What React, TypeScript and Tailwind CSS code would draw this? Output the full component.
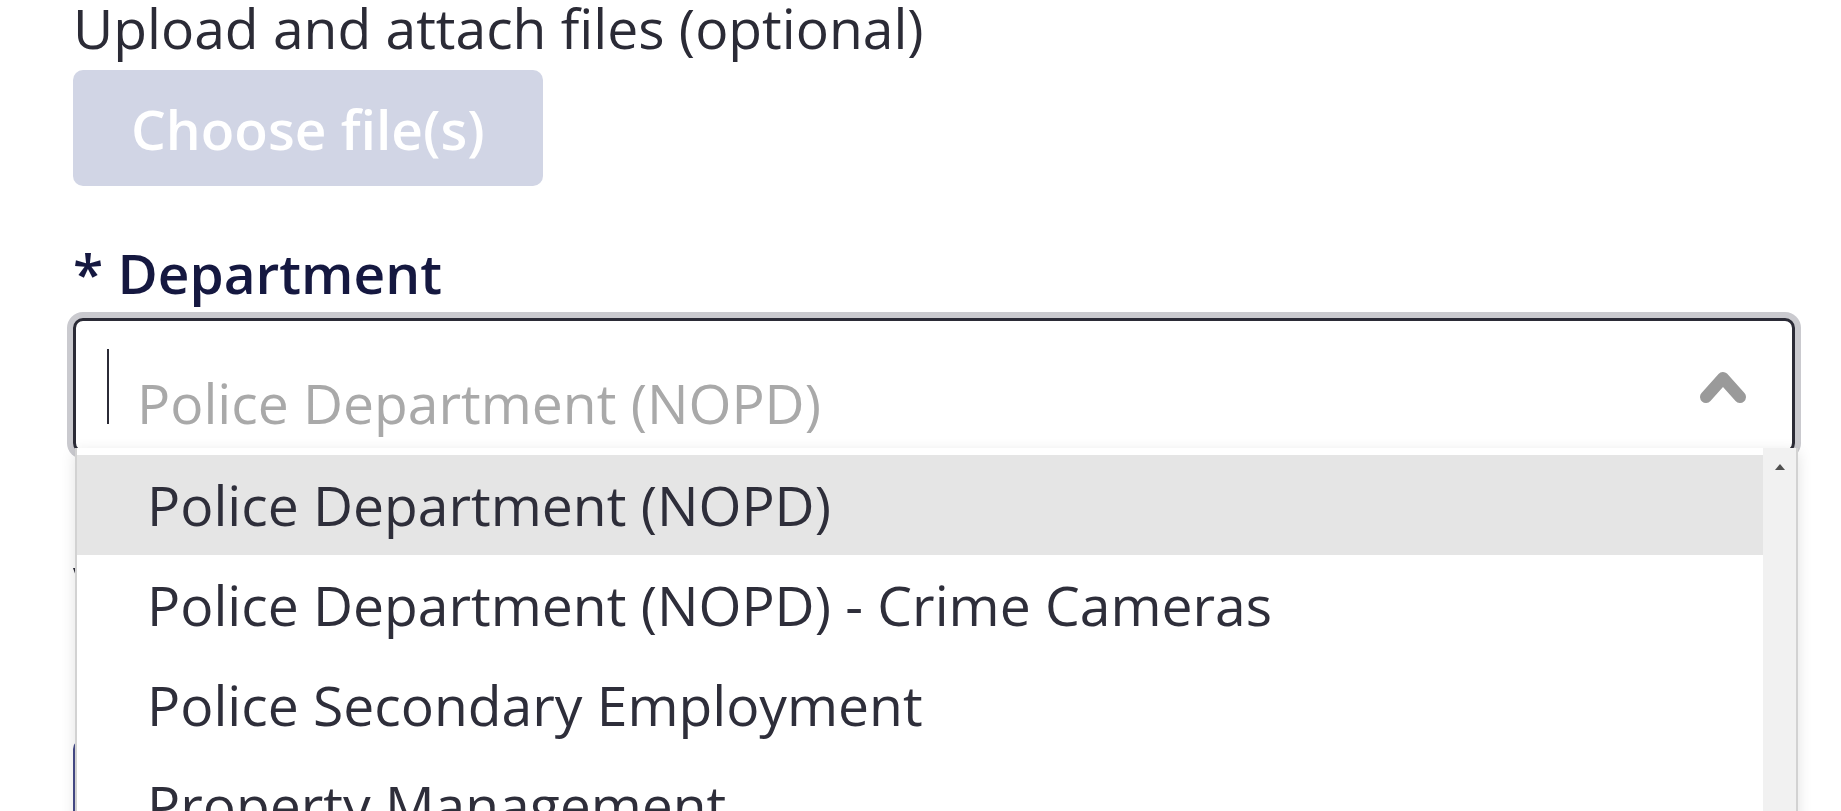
import React from "react";

const options = [
  "Police Department (NOPD)",
  "Police Department (NOPD) - Crime Cameras",
  "Police Secondary Employment",
  "Property Management",
];

const ChevronUp = () => (
  <svg width="48" height="36" viewBox="0 0 48 36" fill="none">
    <path
      d="M7 28 L24 9 L41 28"
      stroke="#9a9a9a"
      strokeWidth="12"
      strokeLinecap="round"
      strokeLinejoin="round"
    />
  </svg>
);

export default function App() {
  return (
    <div className="h-screen w-full overflow-hidden bg-white font-['Open_Sans',sans-serif]">
      <div className="flex flex-col items-start pl-[73px]">
        <p className="text-[55.2px] leading-none text-[#2b2b36]">Upload and attach files (optional)</p>
        <button className="mt-[15px] flex h-[116px] shrink-0 items-center rounded-[10px] bg-[#d1d5e5] px-[58px] text-[55px] font-semibold leading-none text-white">
          Choose file(s)
        </button>

        <p className="mt-[59px] text-[55px] font-semibold leading-none text-[#151840]">* Department</p>

        <div className="relative mt-[18px] mr-[46px] self-stretch">
          {/* select control */}
          <div className="flex h-[135px] items-start rounded-[10px] border-[3px] border-[#2b2b36] bg-white pl-[31px] pr-[45px] shadow-[0_0_0_6px_#cacacf]">
            <div className="mt-[28px] h-[75px] w-[2px] bg-[#2b2b36]" />
            <span className="mt-[54px] ml-[28px] flex-1 text-[55.2px] leading-none text-[#a9a9a9]">
              Police Department (NOPD)
            </span>
            <div className="mt-[48px]">
              <ChevronUp />
            </div>
          </div>

          {/* open menu */}
          <div className="absolute -right-[3px] left-[2px] top-[130px] z-10 flex h-[420px] border-x-2 border-[#d2d2d2] bg-white shadow-[0_4px_14px_rgba(0,0,0,0.12)]">
            <ul className="flex-1 pt-[7px]">
              {options.map((o, i) => (
                <li
                  key={o}
                  className={`flex h-[100px] items-center pl-[70px] text-[55.2px] text-[#2e2e3a] ${
                    i === 0 ? "bg-[#e5e5e5]" : ""
                  }`}
                >
                  {o}
                </li>
              ))}
            </ul>
            <div className="flex w-[33px] justify-center bg-[#f1f1f1] pt-[16px]">
              <div className="h-0 w-0 border-x-[5px] border-b-[6px] border-x-transparent border-b-[#505050]" />
            </div>
          </div>
        </div>

        {/* content under the menu */}
        <p className="mt-[105px] text-[55px] leading-none text-[#2b2b36]">Visible to the public</p>
        <button className="mt-[126px] h-[116px] shrink-0 rounded-[10px] bg-[#464b8a] px-[56px] text-[55px] font-semibold leading-none text-white">
          Submit
        </button>
      </div>
    </div>
  );
}
